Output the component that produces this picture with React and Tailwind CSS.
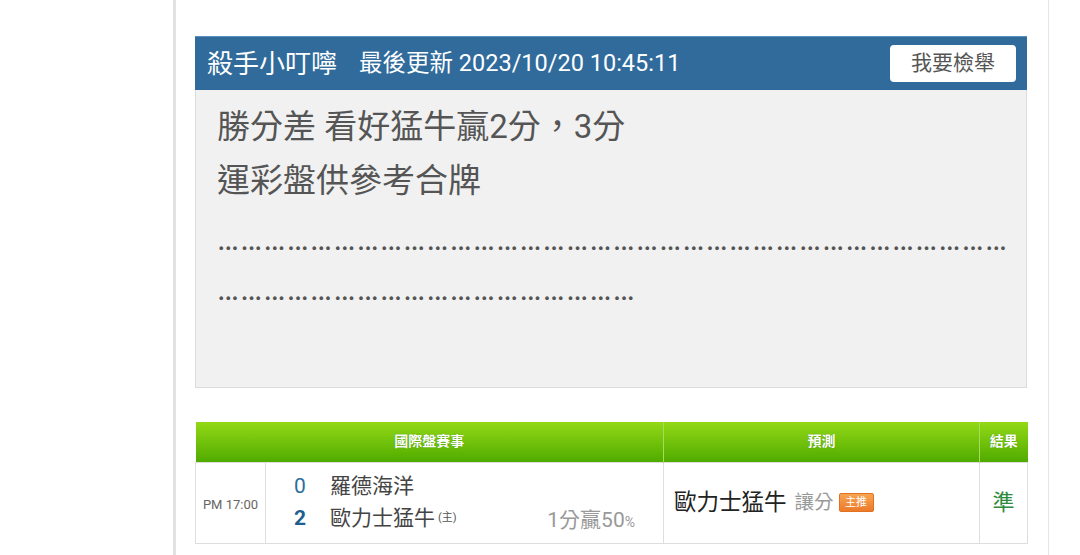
import React from 'react';

const FONT = { fontFamily: 'Roboto, "Noto Sans CJK TC", sans-serif' };

function TipPanel() {
  return (
    <div className="w-[832px]">
      <div className="flex items-center h-[54px] bg-[#306b9c] border-t border-t-[#5b8fbd] pl-[12px] pr-[11px]">
        <span className="text-[26px] text-white leading-none">殺手小叮嚀</span>
        <span className="ml-[22px] text-[23.5px] text-white leading-none">最後更新 2023/10/20 10:45:11</span>
        <button className="ml-auto w-[126px] h-[37px] bg-white rounded-[4px] text-[21px] text-[#555]">
          我要檢舉
        </button>
      </div>
      <div className="h-[298px] bg-[#f1f1f1] border border-t-0 border-[#dcdcdc] pl-[21px] pt-[10px] text-[33px] leading-[54px] text-[#555]">
        <div>勝分差 看好猛牛贏2分，3分</div>
        <div>運彩盤供參考合牌</div>
        <div className="whitespace-nowrap tracking-[1.2px] pt-[4px]">{'…'.repeat(34)}</div>
        <div className="whitespace-nowrap tracking-[1.2px] -mt-[4px]">{'…'.repeat(18)}</div>
      </div>
    </div>
  );
}

function MatchTable() {
  return (
    <table className="mt-[34px] w-[832px] border-collapse table-fixed">
      <colgroup>
        <col className="w-[70px]" />
        <col className="w-[398px]" />
        <col className="w-[316px]" />
        <col className="w-[48px]" />
      </colgroup>
      <thead>
        <tr className="h-[40px] bg-gradient-to-b from-[#93d916] to-[#4fab00] text-white text-[14px] font-bold">
          <th colSpan={2} className="border-r border-[#a4dc5c] [text-shadow:0_0_1px_#3f8a00]">國際盤賽事</th>
          <th className="border-r border-[#a4dc5c] [text-shadow:0_0_1px_#3f8a00]">預測</th>
          <th className="[text-shadow:0_0_1px_#3f8a00]">結果</th>
        </tr>
      </thead>
      <tbody>
        <tr className="h-[81px]">
          <td className="border border-[#dedede] text-center text-[13px] text-[#666] pt-[4px]">PM 17:00</td>
          <td className="border border-[#dedede] pl-[28px] pr-[28px]">
            <div className="flex items-end">
              <div className="flex flex-col gap-[4px]">
                <div className="flex items-center h-[28px]">
                  <span className="w-[36px] text-[21px] text-[#2c6e9c]">0</span>
                  <span className="text-[21px] text-[#444]">羅德海洋</span>
                </div>
                <div className="flex items-center h-[28px]">
                  <span className="w-[36px] text-[21px] font-bold text-[#1f5f90]">2</span>
                  <span className="text-[21px] text-[#444]">歐力士猛牛</span>
                  <span className="ml-[3px] text-[11px] text-[#555]">(主)</span>
                </div>
              </div>
              <div className="ml-auto mb-[-4px] text-[21px] text-[#999]">
                1分贏50<span className="text-[14px]">%</span>
              </div>
            </div>
          </td>
          <td className="border border-[#dedede] pl-[10px]">
            <div className="flex items-center">
              <span className="text-[22.5px] text-[#222]">歐力士猛牛</span>
              <span className="ml-[8px] text-[19.5px] text-[#999]">讓分</span>
              <span className="ml-[5px] w-[35px] h-[19px] flex items-center justify-center rounded-[2px] border border-[#e0731f] bg-gradient-to-b from-[#f7a552] to-[#ec7a2a] text-[11px] text-white leading-none">
                主推
              </span>
            </div>
          </td>
          <td className="border border-[#dedede] text-center text-[22px] text-[#2e8b3e]">準</td>
        </tr>
      </tbody>
    </table>
  );
}

export default function App() {
  return (
    <div className="flex w-[1080px] h-[555px] bg-white overflow-hidden" style={FONT}>
      <div className="w-[173px] shrink-0" />
      <div className="w-[876px] shrink-0 border-l-[3px] border-l-[#e2e2e2] border-r border-r-[#e6e6e6] pl-[19px] pt-[36px]">
        <TipPanel />
        <MatchTable />
      </div>
    </div>
  );
}
